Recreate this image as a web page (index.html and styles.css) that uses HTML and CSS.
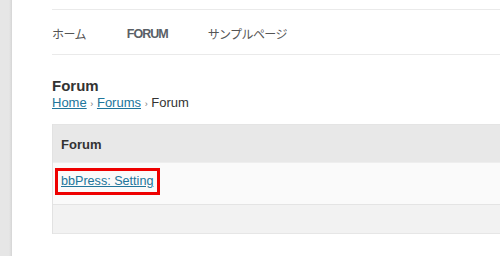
FILE: index.html
```html
<!DOCTYPE html>
<html lang="ja">
<head>
    <meta charset="UTF-8">
    <title>Forum</title>
    <link rel="stylesheet" href="styles.css">
</head>
<body>
    <div class="edge"></div>
    <div class="main">
        <nav class="menu">
            <a href="#" class="jp">ホーム</a>
            <a href="#" class="current">FORUM</a>
            <a href="#" class="jp">サンプルページ</a>
        </nav>

        <div class="page-head">
            <h1>Forum</h1>
            <div class="crumbs">
                <a href="#">Home</a> <span class="sep">›</span> <a href="#">Forums</a> <span class="sep">›</span> Forum
            </div>
        </div>

        <div class="forums">
            <div class="forums-header">Forum</div>
            <div class="forums-row">
                <a href="#" class="marked">bbPress: Setting</a>
            </div>
            <div class="forums-footer"></div>
        </div>
    </div>
</body>
</html>
```

FILE: styles.css
```css
body {
    margin: 0;
    display: flex;
    height: 256px;
    background-color: #fff;
    font-family: 'Liberation Sans', Arial, 'Noto Sans CJK JP', sans-serif;
    font-size: 13px;
    color: #333;
    overflow: hidden;
}
.edge {
    width: 12px;
    flex-shrink: 0;
    background: linear-gradient(to right, #e6e6e6 0, #e6e6e6 9px, #dcdcdc 11px, #d4d4d4 12px);
}
.main {
    flex: 1;
    padding: 9px 0 0 40px;
    min-width: 0;
    overflow: hidden;
}
.menu {
    display: flex;
    border-top: 1px solid #eaeaea;
    border-bottom: 1px solid #eaeaea;
    height: 46px;
    align-items: center;
    padding-top: 3px;
    box-sizing: border-box;
}
.menu a {
    color: #555;
    text-decoration: none;
    margin-right: 41px;
}
.menu a.jp {
    font-size: 12px;
    letter-spacing: -0.6px;
}
.menu a.current {
    font-size: 12.5px;
    font-weight: bold;
    letter-spacing: -1px;
    color: #5a5f66;
    margin-right: 40px;
}
.page-head {
    padding-top: 21px;
}
h1 {
    font-size: 15px;
    font-weight: bold;
    margin: 0;
    line-height: 19px;
    color: #333;
}
.crumbs {
    line-height: 15px;
    font-size: 13px;
}
.crumbs a {
    color: #21759b;
}
.sep {
    font-size: 9px;
    color: #777;
}
.forums {
    margin-top: 12px;
    width: 520px;
    border-left: 1px solid #e2e2e2;
}
.forums-header {
    background-color: #e8e8e8;
    height: 37px;
    line-height: 39px;
    padding-left: 8px;
    font-weight: bold;
    color: #333;
    border-top: 1px solid #e4e4e4;
}
.forums-row {
    background-color: #fafafa;
    height: 43px;
    padding: 5px 0 0 2px;
    box-sizing: border-box;
    border-top: 1px solid #eeeeee;
    border-bottom: 1px solid #e4e4e4;
}
.marked {
    display: inline-block;
    color: #21759b;
    border: 3px solid #e00;
    padding: 3px 4px 3px 3px;
    line-height: 15px;
    font-size: 12.6px;
}
.forums-footer {
    background-color: #f2f2f2;
    height: 28px;
    border-bottom: 1px solid #e6e6e6;
}
```
